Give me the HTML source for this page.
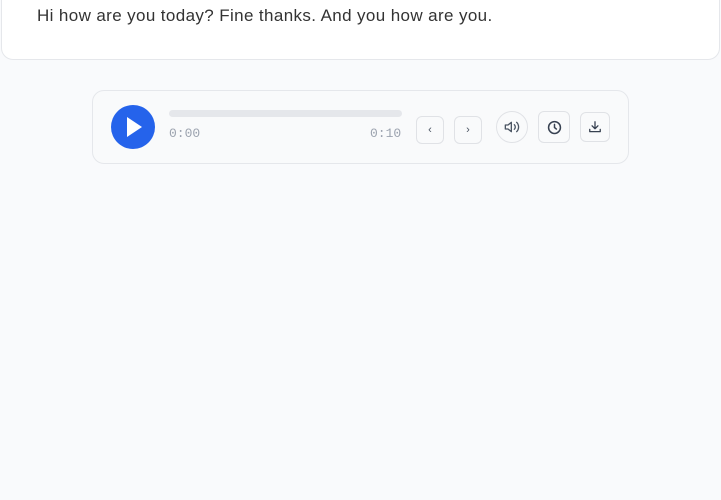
<!DOCTYPE html>
<html><head><style>
*{box-sizing:border-box;margin:0;padding:0}
body{width:721px;height:500px;background:#f9fafc;font-family:"Liberation Sans",sans-serif;position:relative;overflow:hidden}
.card{position:absolute;left:1px;top:-20px;width:719px;height:80px;background:#fff;border:1px solid #e5e7eb;border-radius:12px}
.card p{position:absolute;left:35px;top:25px;font-size:17px;color:#333;letter-spacing:0.38px}
.player{position:absolute;left:92px;top:90px;width:537px;height:74px;background:#f9fafb;border:1px solid #e5e7eb;border-radius:12px}
.play{position:absolute;left:18px;top:14px;width:44px;height:44px;border-radius:50%;background:#2563eb}
.play:after{content:"";position:absolute;left:16px;top:12px;border-left:15px solid #fff;border-top:10px solid transparent;border-bottom:10px solid transparent}
.bar{position:absolute;left:76px;top:19px;width:233px;height:7px;border-radius:4px;background:#e5e7eb}
.t{position:absolute;top:35px;font-family:"Liberation Mono",monospace;font-size:13px;color:#9ca3af}
.b{position:absolute;border:1px solid #e0e2e6;background:#f9fafb;border-radius:6px;display:flex;align-items:center;justify-content:center;color:#4b5563;font-size:11px}
</style></head><body>
<div class="card"><p>Hi how are you today? Fine thanks. And you how are you.</p></div>
<div class="player">
<div class="play"></div>
<div class="bar"></div>
<div class="t" style="left:76px">0:00</div>
<div class="t" style="left:277px">0:10</div>
<div class="b" style="left:323px;top:25px;width:28px;height:28px">‹</div>
<div class="b" style="left:361px;top:25px;width:28px;height:28px">›</div>
<div class="b" style="left:403px;top:20px;width:32px;height:32px;border-radius:50%"><svg width="16" height="16" viewBox="0 0 24 24" fill="none" stroke="#4b5563" stroke-width="2" stroke-linejoin="round" stroke-linecap="round"><path d="M11 5L6 9H2v6h4l5 4z"/><path d="M15.5 8.5a5 5 0 0 1 0 7M19 5a10 10 0 0 1 0 14"/></svg></div>
<div class="b" style="left:445px;top:20px;width:32px;height:32px"><svg width="15" height="15" viewBox="0 0 24 24" fill="none" stroke="#374151" stroke-width="2.4" stroke-linecap="round"><circle cx="12" cy="12" r="9.5"/><path d="M12 7v5l3 2.5"/></svg></div>
<div class="b" style="left:487px;top:21px;width:30px;height:30px"><svg width="14" height="14" viewBox="0 0 24 24" fill="none" stroke="#374151" stroke-width="2.2" stroke-linecap="round" stroke-linejoin="round"><path d="M12 3v12M7 10l5 5 5-5M3 16v4h18v-4"/></svg></div>
</div>
</body></html>
